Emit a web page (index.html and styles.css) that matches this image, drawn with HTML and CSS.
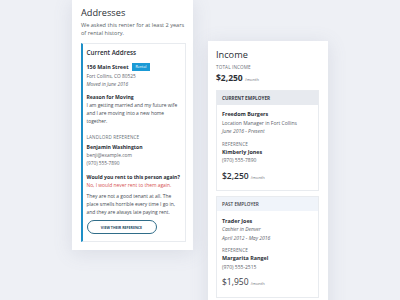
FILE: index.html
```html
<!DOCTYPE html>
<html lang="en">
<head>
  <meta charset="UTF-8" />
  <title>Renter Profile</title>
  <link rel="stylesheet" href="styles.css">
</head>
<body>
  <div class="board">
    <!-- Addresses card -->
    <div class="card addresses">
      <h2 class="card-title">Addresses</h2>
      <p class="intro">We asked this renter for at least 2 years<br>of rental history.</p>

      <div class="address-box">
        <h3 class="box-title">Current Address</h3>
        <div class="street">156 Main Street <span class="badge">Rental</span></div>
        <div class="muted">Fort Collins, CO 80525</div>
        <div class="muted italic">Moved in June 2016</div>

        <div class="label-strong reason">Reason for Moving</div>
        <p class="body">I am getting married and my future wife<br>and I are moving into a new home<br>together.</p>

        <div class="caps landlord">Landlord Reference</div>
        <div class="label-strong ref-name">Benjamin Washington</div>
        <div class="muted">benji@example.com</div>
        <div class="muted">(970) 555-7890</div>

        <div class="label-strong question">Would you rent to this person again?</div>
        <div class="warn">No, I would never rent to them again.</div>
        <p class="body comment">They are not a good tenant at all. The<br>place smells horrible every time I go in,<br>and they are always late paying rent.</p>

        <button class="outline-btn">View their reference</button>
      </div>
    </div>

    <!-- Income card -->
    <div class="card income">
      <h2 class="card-title">Income</h2>
      <div class="caps total">Total Income</div>
      <div class="amount">$2,250 <span>/month</span></div>

      <div class="employer">
        <div class="employer-head current">Current Employer</div>
        <div class="employer-body">
          <div class="label-strong">Freedom Burgers</div>
          <div class="muted">Location Manager in Fort Collins</div>
          <div class="muted italic">June 2016 - Present</div>
          <div class="caps ref">Reference</div>
          <div class="label-strong">Kimberly Jones</div>
          <div class="muted">(970) 555-7890</div>
          <div class="pay">$2,250 <span>/month</span></div>
        </div>
      </div>

      <div class="employer">
        <div class="employer-head past">Past Employer</div>
        <div class="employer-body">
          <div class="label-strong">Trader Joes</div>
          <div class="muted italic">Cashier in Denver</div>
          <div class="muted italic">April 2012 - May 2016</div>
          <div class="caps ref">Reference</div>
          <div class="label-strong">Margarita Rangel</div>
          <div class="muted">(970) 555-2515</div>
          <div class="pay light">$1,950 <span>/month</span></div>
        </div>
      </div>
    </div>
  </div>
</body>
</html>
```

FILE: styles.css
```css
/* ---------- base ---------- */
body {
  margin: 0;
  height: 300px;
  overflow: hidden;
  font-family: 'Open Sans', 'Noto Sans', sans-serif;
  background: #eef0f5;
  color: #2b2f36;
}

.board {
  display: flex;
  align-items: flex-start;
  gap: 15px;
  padding-left: 72px;
}

/* ---------- cards ---------- */
.card {
  background: #fff;
  box-shadow: 0 3px 18px rgba(110, 120, 150, 0.16);
}

.addresses {
  width: 111px;
  padding: 7px 1px 8px 9px;
}

.income {
  width: 103px;
  margin-top: 41px;
  padding: 8px 9px 20px 8px;
}

.card-title {
  margin: 0;
  font-size: 9.2px;
  font-weight: 400;
  line-height: 12px;
  color: #2a2e35;
}

.intro {
  margin: 2px 0 0;
  font-size: 5.6px;
  line-height: 8px;
  color: #5a5f67;
}

/* ---------- current address ---------- */
.address-box {
  width: 96px;
  margin-top: 6px;
  border: 1px solid #e8ebef;
  border-left: 2.5px solid #1d8fc7;
  padding: 4px 2px 7px 3.5px;
}

.box-title {
  margin: 0;
  font-size: 6.3px;
  font-weight: 600;
  line-height: 10px;
  color: #2a2e35;
}

.street {
  margin-top: 4.5px;
  font-size: 5.4px;
  font-weight: 700;
  line-height: 9px;
}

.badge {
  display: inline-block;
  margin-left: 2px;
  padding: 0 3.5px;
  background: #1a9ad6;
  color: #fff;
  font-size: 3.7px;
  font-weight: 400;
  line-height: 7.5px;
  vertical-align: 0.5px;
}

.muted {
  font-size: 4.8px;
  line-height: 8px;
  color: #5d626a;
}

.italic {
  font-style: italic;
}

.label-strong {
  font-size: 5.1px;
  font-weight: 700;
  line-height: 8px;
  color: #2b2f36;
  white-space: nowrap;
}

.reason {
  margin-top: 5.5px;
}

.body {
  margin: 0;
  font-size: 4.9px;
  line-height: 8px;
  color: #464b53;
}

.caps {
  font-size: 4.6px;
  line-height: 8px;
  text-transform: uppercase;
  letter-spacing: 0.15px;
  color: #6a6f77;
}

.landlord {
  margin-top: 7.5px;
}

.ref-name {
  margin-top: 2.5px;
}

.question {
  margin-top: 5.5px;
}

.warn {
  font-size: 4.9px;
  line-height: 8px;
  color: #d65252;
}

.comment {
  margin-top: 3.5px;
}

.outline-btn {
  display: block;
  margin-top: 4px;
  width: 70px;
  height: 14px;
  padding: 0;
  border: 1px solid #2f6d89;
  border-radius: 7px;
  background: #fff;
  font-family: inherit;
  font-size: 3.6px;
  font-weight: 700;
  text-transform: uppercase;
  color: #23465c;
}

/* ---------- income ---------- */
.total {
  margin-top: 3px;
  line-height: 7px;
}

.amount {
  margin-top: 1.5px;
  font-size: 8.5px;
  font-weight: 700;
  line-height: 10px;
}

.amount span, .pay span {
  font-size: 4px;
  font-weight: 400;
  color: #6b7078;
}

.employer {
  margin-top: 5px;
  border: 1px solid #e8ebef;
}

.employer-head {
  padding: 0 5px;
  font-size: 4.7px;
  font-weight: 700;
  line-height: 14px;
  text-transform: uppercase;
  color: #3b4048;
}

.employer-head.current {
  background: #e7eaef;
}

.employer-head.past {
  background: #f0f4fa;
  font-weight: 600;
}

.employer-body {
  padding: 5.5px 5px 7.5px;
}

.employer-body .label-strong {
  font-size: 5.4px;
  line-height: 8.5px;
}

.employer-body .muted {
  font-size: 5px;
  line-height: 8.5px;
}

.ref {
  margin-top: 4px;
}

.pay {
  margin-top: 6px;
  font-size: 8.5px;
  font-weight: 600;
  line-height: 10px;
}

.pay.light {
  font-weight: 400;
  color: #3b4048;
}
```
